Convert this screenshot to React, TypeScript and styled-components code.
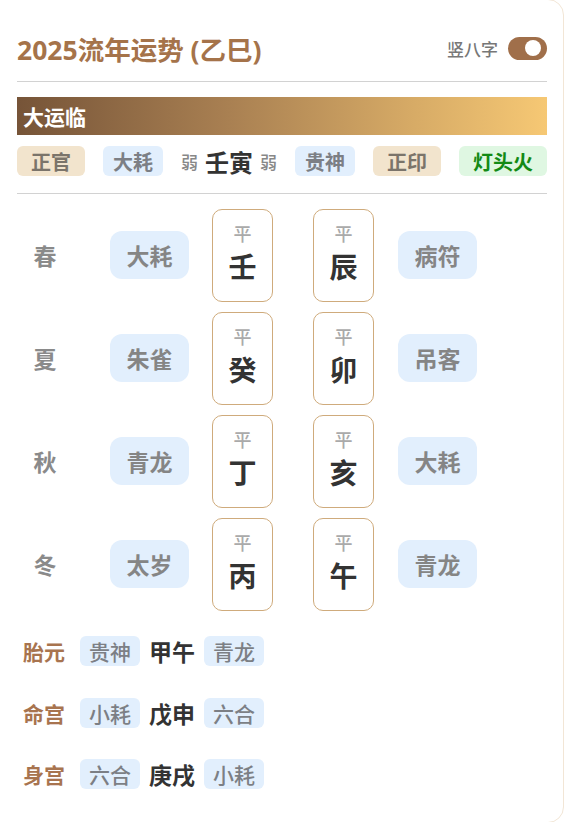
import React from 'react';
import styled, { createGlobalStyle } from 'styled-components';

const GlobalStyle = createGlobalStyle`
  html, body {
    margin: 0;
    padding: 0;
    background: #fff;
  }
  body {
    font-family: "Noto Sans", "Noto Sans CJK SC", sans-serif;
  }
`;

type Tone = 'beige' | 'blue' | 'green';

const tones: Record<Tone, { bg: string; fg: string; pad: number }> = {
  beige: { bg: '#f2e4cd', fg: '#7b746a', pad: 14 },
  blue: { bg: '#e2effd', fg: '#7c7f85', pad: 10 },
  green: { bg: '#dff7e2', fg: '#138a15', pad: 14 },
};

const seasons = [
  { name: '春', left: '大耗', gan: '壬', zhi: '辰', right: '病符' },
  { name: '夏', left: '朱雀', gan: '癸', zhi: '卯', right: '吊客' },
  { name: '秋', left: '青龙', gan: '丁', zhi: '亥', right: '大耗' },
  { name: '冬', left: '太岁', gan: '丙', zhi: '午', right: '青龙' },
];

const palaces = [
  { name: '胎元', left: '贵神', gz: '甲午', right: '青龙' },
  { name: '命宫', left: '小耗', gz: '戊申', right: '六合' },
  { name: '身宫', left: '六合', gz: '庚戌', right: '小耗' },
];

export default function App() {
  return (
    <>
      <GlobalStyle />
      <Card>
        <Header>
          <Title>2025流年运势 (乙巳)</Title>
          <ToggleWrap>
            <ToggleLabel>竖八字</ToggleLabel>
            <Switch>
              <Knob />
            </Switch>
          </ToggleWrap>
        </Header>
        <Divider />
        <Banner>大运临</Banner>
        <TagRow>
          <Tag $tone="beige">正官</Tag>
          <Tag $tone="blue">大耗</Tag>
          <Center>
            <Weak>弱</Weak>
            <GanZhi>壬寅</GanZhi>
            <Weak>弱</Weak>
          </Center>
          <Tag $tone="blue">贵神</Tag>
          <Tag $tone="beige">正印</Tag>
          <Tag $tone="green">灯头火</Tag>
        </TagRow>
        <Divider $top={17} />
        <SeasonGrid>
          {seasons.map((s) => (
            <React.Fragment key={s.name}>
              <Season>{s.name}</Season>
              <Star>{s.left}</Star>
              <Pillar>
                <Level>平</Level>
                <Char>{s.gan}</Char>
              </Pillar>
              <Pillar>
                <Level>平</Level>
                <Char>{s.zhi}</Char>
              </Pillar>
              <Star>{s.right}</Star>
            </React.Fragment>
          ))}
        </SeasonGrid>
        <Palaces>
          {palaces.map((p) => (
            <PalaceRow key={p.name}>
              <PalaceName>{p.name}</PalaceName>
              <SmallTag>{p.left}</SmallTag>
              <PalaceGz>{p.gz}</PalaceGz>
              <SmallTag>{p.right}</SmallTag>
            </PalaceRow>
          ))}
        </Palaces>
      </Card>
    </>
  );
}

const Card = styled.div`
  box-sizing: border-box;
  width: 565px;
  height: 824px;
  margin: -1px 0 0 -1px;
  padding: 0 16px 0 17px;
  background: #fff;
  border: 1px solid #f2e6d6;
  border-radius: 0 16px 16px 0;
  overflow: hidden;
`;

const Header = styled.div`
  display: flex;
  align-items: center;
  justify-content: space-between;
  height: 40px;
  margin-top: 28px;
`;

const Title = styled.h1`
  margin: 0;
  font-size: 26.5px;
  font-weight: 700;
  color: #a5734a;
  letter-spacing: 0;
`;

const ToggleWrap = styled.div`
  display: flex;
  align-items: center;
  gap: 10px;
`;

const ToggleLabel = styled.span`
  font-size: 17px;
  font-weight: 500;
  color: #777;
`;

const Switch = styled.div`
  display: flex;
  align-items: center;
  justify-content: flex-end;
  box-sizing: border-box;
  width: 39px;
  height: 23px;
  padding: 0 6px 0 0;
  border-radius: 12px;
  background: #a06f4a;
`;

const Knob = styled.div`
  width: 16px;
  height: 16px;
  border-radius: 50%;
  background: #fff;
`;

const Divider = styled.div<{ $top?: number }>`
  height: 1px;
  background: #d2d2d2;
  margin-top: ${(p) => p.$top ?? 13}px;
`;

const Banner = styled.div`
  display: flex;
  align-items: center;
  height: 38px;
  margin-top: 15px;
  padding-left: 6px;
  background: linear-gradient(90deg, #765438 0%, #a98052 40%, #d7ab66 75%, #f6c874 100%);
  color: #fff;
  font-size: 21px;
  font-weight: 700;
`;

const TagRow = styled.div`
  display: flex;
  align-items: center;
  justify-content: space-between;
  margin-top: 11px;
  height: 30px;
`;

const Tag = styled.span<{ $tone: Tone }>`
  display: inline-flex;
  align-items: center;
  height: 30px;
  padding: 0 ${(p) => tones[p.$tone].pad}px;
  border-radius: 6px;
  background: ${(p) => tones[p.$tone].bg};
  color: ${(p) => tones[p.$tone].fg};
  font-size: 20px;
  font-weight: 700;
`;

const Center = styled.div`
  display: flex;
  align-items: center;
  gap: 7px;
`;

const Weak = styled.span`
  font-size: 17px;
  font-weight: 500;
  color: #888;
`;

const GanZhi = styled.span`
  font-size: 24px;
  font-weight: 700;
  color: #333;
`;

const SeasonGrid = styled.div`
  display: grid;
  grid-template-columns: 56px 116px 84px 101px 103px;
  grid-auto-rows: 92px;
  row-gap: 11px;
  align-items: center;
  margin-top: 15px;
`;

const Season = styled.div`
  justify-self: center;
  font-size: 23px;
  font-weight: 700;
  color: #8a8a8a;
`;

const Star = styled.div`
  justify-self: end;
  display: flex;
  align-items: center;
  justify-content: center;
  width: 79px;
  height: 48px;
  border-radius: 12px;
  background: #e2effd;
  color: #858585;
  font-size: 23px;
  font-weight: 700;
`;

const Pillar = styled.div`
  justify-self: end;
  box-sizing: border-box;
  display: flex;
  flex-direction: column;
  align-items: center;
  width: 61px;
  height: 93px;
  padding-top: 13px;
  border: 1px solid #cfab7c;
  border-radius: 10px;
  background: #fff;
`;

const Level = styled.span`
  font-size: 18px;
  line-height: 22px;
  font-weight: 500;
  color: #aaa;
`;

const Char = styled.span`
  margin-top: 4px;
  font-size: 28px;
  line-height: 36px;
  font-weight: 700;
  color: #333;
`;

const Palaces = styled.div`
  display: flex;
  flex-direction: column;
  gap: 31.5px;
  margin-top: 26px;
  padding-left: 6px;
`;

const PalaceRow = styled.div`
  display: flex;
  align-items: center;
  height: 30px;
`;

const PalaceName = styled.span`
  width: 57px;
  font-size: 21px;
  font-weight: 700;
  color: #a8744f;
`;

const SmallTag = styled.span`
  display: inline-flex;
  align-items: center;
  height: 30px;
  padding: 0 9px;
  border-radius: 6px;
  background: #e2effd;
  color: #7c7f85;
  font-size: 21px;
  font-weight: 500;
`;

const PalaceGz = styled.span`
  margin: 0 9px;
  font-size: 23px;
  font-weight: 700;
  color: #333;
`;
